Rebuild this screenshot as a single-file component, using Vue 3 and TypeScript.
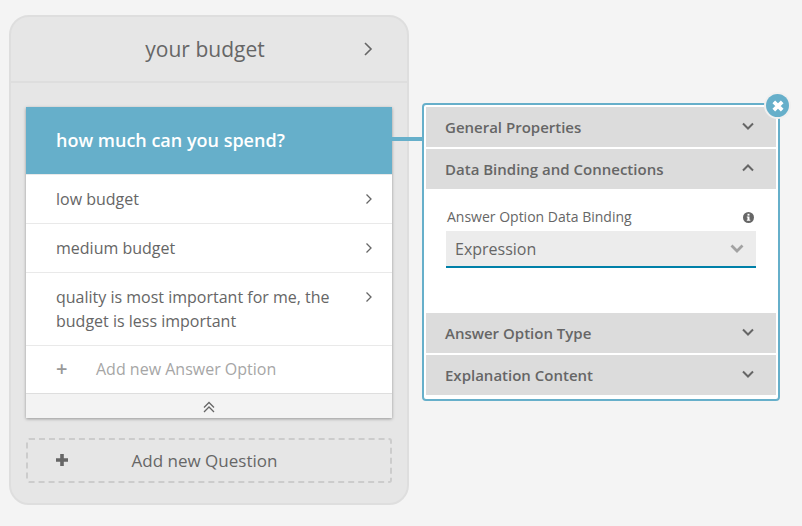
<script setup lang="ts">
interface AnswerOption {
  id: number
  label: string
}

const answers: AnswerOption[] = [
  { id: 1, label: 'low budget' },
  { id: 2, label: 'medium budget' },
  { id: 3, label: 'quality is most important for me, the budget is less important' },
]
</script>

<template>
  <main class="page">
    <section class="column">
      <header class="column-head">
        <h1 class="column-title">your budget</h1>
        <svg class="column-arrow" width="10" height="16" viewBox="0 0 10 16">
          <path d="M2 2l6 6-6 6" fill="none" stroke="#666" stroke-width="1.6" />
        </svg>
      </header>

      <div class="column-body">
        <article class="card">
          <div class="question">
            how much can you spend?
            <span class="connector" />
          </div>
          <div v-for="answer in answers" :key="answer.id" class="answer">
            <span class="answer-label">{{ answer.label }}</span>
            <svg class="answer-arrow" width="8" height="12" viewBox="0 0 8 12">
              <path d="M1.500 1.500L6 6l-4.500 4.500" fill="none" stroke="#666" stroke-width="1.300" />
            </svg>
          </div>
          <div class="add-answer">
            <span class="add-answer-plus">+</span>
            <span>Add new Answer Option</span>
          </div>
          <div class="collapse">
            <svg class="collapse-icon" width="12" height="12" viewBox="0 0 12 12">
              <path d="M1 6.500L6 1.500l5 5M1 11L6 6l5 5" fill="none" stroke="#666" stroke-width="1.300" />
            </svg>
          </div>
        </article>

        <div class="add-question">
          <svg class="add-question-plus" width="14" height="14" viewBox="0 0 14 14">
            <path d="M7 1v12M1 7h12" fill="none" stroke="#666" stroke-width="3.600" />
          </svg>
          <span>Add new Question</span>
        </div>
      </div>
    </section>

    <aside class="panel">
      <button class="close" type="button" aria-label="Close">
        <svg width="14" height="14" viewBox="0 0 14 14">
          <path d="M2.800 2.800l8.400 8.400M11.200 2.800l-8.400 8.400" fill="none" stroke="#fff" stroke-width="3.800" />
        </svg>
      </button>

      <div class="section-head">
        <span>General Properties</span>
        <svg width="12" height="8" viewBox="0 0 12 8">
          <path d="M1 1.500l5 5 5-5" fill="none" stroke="#666" stroke-width="2" />
        </svg>
      </div>
      <div class="section-head">
        <span>Data Binding and Connections</span>
        <svg width="12" height="8" viewBox="0 0 12 8">
          <path d="M1 6.500l5-5 5 5" fill="none" stroke="#666" stroke-width="2" />
        </svg>
      </div>

      <div class="section-body">
        <div class="field-label">
          <span>Answer Option Data Binding</span>
          <svg width="11" height="11" viewBox="0 0 11 11">
            <circle cx="5.500" cy="5.500" r="5.500" fill="#666" />
            <rect x="4.500" y="1.800" width="2" height="1.800" fill="#fff" />
            <path d="M3.800 4.600h2.700v3.200h.8v1H3.800v-1h.7V5.600h-.7z" fill="#fff" />
          </svg>
        </div>
        <div class="select">
          <span>Expression</span>
          <svg width="14" height="9" viewBox="0 0 14 9">
            <path d="M1.500 1.500L7 7l5.500-5.500" fill="none" stroke="#a2a2a2" stroke-width="2.800" />
          </svg>
        </div>
      </div>

      <div class="section-head">
        <span>Answer Option Type</span>
        <svg width="12" height="8" viewBox="0 0 12 8">
          <path d="M1 1.500l5 5 5-5" fill="none" stroke="#666" stroke-width="2" />
        </svg>
      </div>
      <div class="section-head">
        <span>Explanation Content</span>
        <svg width="12" height="8" viewBox="0 0 12 8">
          <path d="M1 1.500l5 5 5-5" fill="none" stroke="#666" stroke-width="2" />
        </svg>
      </div>
    </aside>
  </main>
</template>

<style scoped>
.page {
  align-items: flex-start;
  background: #f4f4f4;
  box-sizing: border-box;
  color: #666;
  display: flex;
  font-family: 'Open Sans', sans-serif;
  height: 526px;
  overflow: hidden;
  padding: 15px 0 0 9px;
  width: 802px;
}

.column {
  background: #e6e6e6;
  border: 2px solid #dedede;
  border-radius: 20px;
  box-sizing: border-box;
  flex: none;
  height: 490px;
  width: 400px;
}

.column-head {
  align-items: center;
  border-bottom: 2px solid #dedede;
  box-sizing: border-box;
  display: flex;
  height: 66px;
  justify-content: center;
  padding-right: 8px;
  position: relative;
}

.column-title {
  font-size: 21px;
  font-weight: 400;
  margin: 0;
}

.column-arrow {
  position: absolute;
  right: 34px;
  top: 24px;
}

.column-body {
  padding: 24px 15px 0;
}

.card {
  background: #fff;
  box-shadow: 0 1px 3px rgba(0, 0, 0, 0.35);
}

.question {
  align-items: center;
  background: #66afca;
  box-sizing: border-box;
  color: #fff;
  display: flex;
  font-size: 18px;
  font-weight: 600;
  height: 67px;
  padding: 0 0 2px 30px;
  position: relative;
}

.connector {
  background: #66afca;
  height: 4px;
  left: 100%;
  position: absolute;
  top: 30px;
  width: 30px;
}

.answer {
  border-top: 1px solid #e9e9e9;
  display: flex;
  font-size: 16px;
  justify-content: space-between;
  line-height: 24px;
  padding: 12px 19px 12px 30px;
}

.answer:first-of-type {
  border-top-color: #e0e0e0;
}

.answer-label {
  width: 290px;
}

.answer-arrow {
  flex: none;
  margin-top: 6px;
}

.add-answer {
  align-items: center;
  border-top: 1px solid #e9e9e9;
  box-sizing: border-box;
  color: #a6a6a6;
  display: flex;
  font-size: 16px;
  height: 48px;
  padding: 0 0 2px 30px;
}

.add-answer-plus {
  color: #999;
  font-size: 20px;
  font-weight: 600;
  width: 40px;
}

.collapse {
  align-items: center;
  background: #f3f3f3;
  border-top: 1px solid #dedede;
  box-sizing: border-box;
  display: flex;
  height: 25px;
  justify-content: center;
}

.collapse-icon {
  margin-top: 2px;
}

.add-question {
  align-items: center;
  border: 2px dashed #ccc;
  border-radius: 3px;
  box-sizing: border-box;
  display: flex;
  font-size: 17px;
  height: 45px;
  justify-content: center;
  margin-top: 20px;
  padding-right: 9px;
  position: relative;
}

.add-question-plus {
  left: 27px;
  position: absolute;
  top: 13px;
}

.panel {
  background: #fff;
  border: 2px solid #66afca;
  border-radius: 4px;
  box-sizing: border-box;
  flex: none;
  height: 298px;
  margin: 88px 0 0 13px;
  padding: 2px;
  position: relative;
  width: 358px;
}

.close {
  align-items: center;
  background: #66afca;
  border: 0;
  border-radius: 50%;
  box-shadow: 0 0 0 2px #f0f0f0;
  display: flex;
  height: 23px;
  justify-content: center;
  padding: 0;
  position: absolute;
  right: -11px;
  top: -11px;
  width: 23px;
}

.section-head {
  align-items: center;
  background: #dcdcdc;
  display: flex;
  font-size: 15px;
  font-weight: 600;
  height: 40px;
  justify-content: space-between;
  margin-bottom: 2px;
  padding: 0 22px 0 19px;
}

.section-head svg {
  margin-top: -3px;
}

.section-body {
  box-sizing: border-box;
  height: 124px;
  margin-top: -2px;
  padding: 18px 20px 0;
}

.field-label {
  align-items: center;
  display: flex;
  font-size: 14px;
  justify-content: space-between;
  line-height: 20px;
  padding: 0 2px 0 1px;
}

.select {
  align-items: center;
  background: #ececec;
  border-bottom: 2px solid #0080a8;
  box-sizing: border-box;
  display: flex;
  font-size: 16px;
  height: 37px;
  justify-content: space-between;
  margin-top: 4px;
  padding: 0 12px 0 9px;
}
</style>

<style>
html,
body {
  background: #f4f4f4;
}
</style>
